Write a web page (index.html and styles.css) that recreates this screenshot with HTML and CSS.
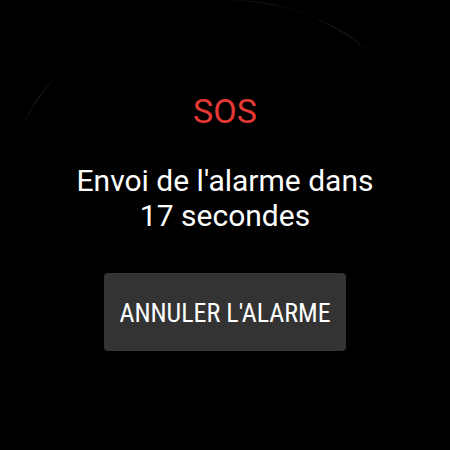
FILE: index.html
```
<!DOCTYPE html>
<html lang="fr">
<head>
    <meta charset="UTF-8">
    <meta name="viewport" content="width=device-width, initial-scale=1.0">
    <title>SOS</title>
    <link rel="stylesheet" href="styles.css">
</head>
<body>
    <svg class="bezel" viewBox="0 0 450 450" aria-hidden="true">
        <defs>
            <linearGradient id="fade">
                <stop offset="0" stop-color="#000000"/>
                <stop offset="0.5" stop-color="#505050"/>
                <stop offset="1" stop-color="#000000"/>
            </linearGradient>
            <linearGradient id="fade-top">
                <stop offset="0" stop-color="#101010"/>
                <stop offset="0.4" stop-color="#303030"/>
                <stop offset="1" stop-color="#080808"/>
            </linearGradient>
        </defs>
        <path stroke="url(#fade)" d="M19 132A225 225 0 0 1 59 73"/>
        <path stroke="url(#fade-top)" d="M230 0A225 225 0 0 1 310 16"/>
        <path stroke="url(#fade)" d="M310 16A225 225 0 0 1 374 55"/>
    </svg>
    <main class="alarm">
        <h1>SOS</h1>
        <p>Envoi de l'alarme dans <span id="seconds">17</span> secondes</p>
        <button type="button">Annuler l'alarme</button>
    </main>
</body>
</html>
```
FILE: styles.css
```
body {
    margin: 0;
    min-height: 100vh;
    background-color: #000000;
    color: #ffffff;
    font-family: Roboto, sans-serif;
}

.bezel {
    position: absolute;
    top: 0;
    left: 0;
    width: 100%;
    fill: none;
    stroke-width: 1;
    stroke-dasharray: 1 1;
}

.alarm {
    display: flex;
    flex-direction: column;
    align-items: center;
    padding: 91px 64px 0;
    text-align: center;
}

h1 {
    margin: 0;
    color: #e53935;
    font-size: 34px;
    font-weight: 400;
    line-height: 40px;
}

p {
    margin: 32px 0 40px;
    font-size: 30px;
    line-height: 35px;
}

button {
    padding: 21px 15px 19px;
    background-color: #333333;
    color: #ffffff;
    border: none;
    border-radius: 4px;
    font-family: "Roboto Condensed", Roboto, sans-serif;
    font-size: 26px;
    line-height: 38px;
    text-transform: uppercase;
    cursor: pointer;
}
```
